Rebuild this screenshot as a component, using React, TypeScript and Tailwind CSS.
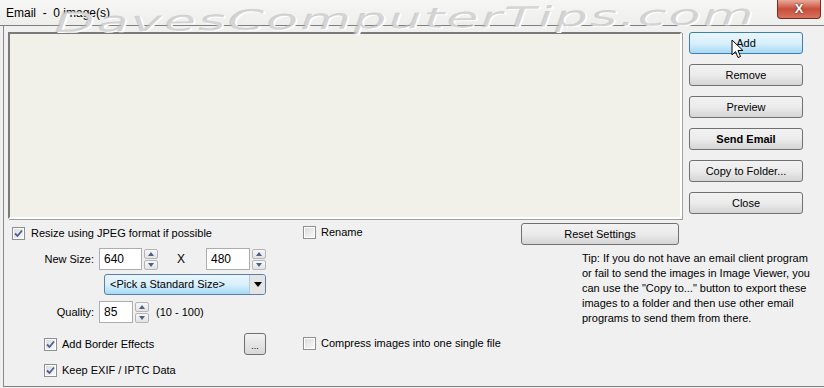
const font = { fontFamily: '"Liberation Sans", Arial, sans-serif' };

function Check({ checked }: { checked?: boolean }) {
  return (
    <div className="w-[13px] h-[13px] shrink-0 border border-[#8e8f8f] bg-white p-[1px]">
      <div className="w-full h-full bg-gradient-to-br from-[#dcdcdc] to-[#f8f8f8] flex items-center justify-center">
        {checked && (
          <svg width="9" height="9" viewBox="0 0 9 9">
            <path d="M1 4.5 L3.5 7 L8 1.5" fill="none" stroke="#4a5f97" strokeWidth="1.8" />
          </svg>
        )}
      </div>
    </div>
  );
}

function Btn({ label, bold, hover, className = "" }: { label: string; bold?: boolean; hover?: boolean; className?: string }) {
  return (
    <div
      className={`h-[22px] flex items-center justify-center rounded-[3px] border text-[11px] text-black ${
        hover
          ? "border-[#3c7fb1] bg-gradient-to-b from-[#eaf6fd] via-[#d9f0fc] to-[#a7d9f5]"
          : "border-[#707070] bg-gradient-to-b from-[#f2f2f2] via-[#ebebeb] to-[#d5d5d5]"
      } ${bold ? "font-bold" : ""} ${className}`}
    >
      {label}
    </div>
  );
}

function Spin() {
  return (
    <div className="ml-[2px] flex flex-col gap-[1px]">
      {[0, 1].map((i) => (
        <div key={i} className="w-[14px] h-[10px] border border-[#b5b5b5] rounded-[2px] bg-gradient-to-b from-[#f7f7f7] to-[#e3e3e3] flex items-center justify-center">
          <svg width="6" height="4" viewBox="0 0 6 4">
            <path d={i === 0 ? "M0 4 L3 0 L6 4Z" : "M0 0 L3 4 L6 0Z"} fill="#4d6185" />
          </svg>
        </div>
      ))}
    </div>
  );
}

function Field({ value, w }: { value: string; w: string }) {
  return (
    <div className={`${w} h-[22px] border border-[#abadb3] bg-white flex items-center pl-[4px] text-[12px]`}>{value}</div>
  );
}

export default function App() {
  return (
    <div className="relative w-[824px] h-[388px] overflow-hidden bg-[#f0f0f0] text-[11px] text-black" style={font}>
      {/* title bar */}
      <div className="h-[26px] flex items-center pl-[6px] text-[12px] bg-gradient-to-b from-[#f6f6f4] to-[#eeeeec] border-b border-[#7f7f7f]">
        <span className="whitespace-pre">Email  -  0 image(s)</span>
      </div>

      {/* body */}
      <div className="ml-[3px] h-[361px] border-l border-b border-[#7f7f7f] border-l-[#8a8a8a]">
        <div className="flex pt-[6px] pl-[4px]">
          <div className="w-[674px] h-[187px] border-2 border-[#7a7a7a] border-r-white border-b-white bg-[#f1f1e9] shadow-[1px_1px_0_#a0a0a0]" />
          <div className="ml-[7px] w-[114px] flex flex-col gap-[10px]">
            <Btn label="Add" hover />
            <Btn label="Remove" />
            <Btn label="Preview" />
            <Btn label="Send Email" bold />
            <Btn label="Copy to Folder..." />
            <Btn label="Close" />
          </div>
        </div>

        <div className="flex">
          {/* column A */}
          <div className="w-[291px] pl-[8px] pt-[8px] flex flex-col">
            <div className="flex items-center gap-[6px] h-[13px]">
              <Check checked />
              <span>Resize using JPEG format if possible</span>
            </div>
            <div className="flex items-center mt-[8px] h-[22px]">
              <span className="w-[87px] text-right pr-[5px]">New Size:</span>
              <Field value="640" w="w-[43px]" />
              <Spin />
              <span className="ml-[19px] w-[29px] text-[12px]">X</span>
              <Field value="480" w="w-[44px]" />
              <Spin />
            </div>
            <div className="ml-[92px] mt-[4px] w-[162px] h-[21px] rounded-[3px] border border-[#5c7fa5] bg-gradient-to-b from-[#eaf6fd] via-[#d9f0fc] to-[#a7d9f5] flex items-center">
              <span className="flex-1 pl-[5px]">&lt;Pick a Standard Size&gt;</span>
              <div className="w-[16px] h-full border-l border-[#b9c9d8] flex items-center justify-center bg-[#e4e4e4] rounded-r-[2px]">
                <svg width="8" height="5" viewBox="0 0 8 5"><path d="M0 0 L8 0 L4 5Z" fill="#000" /></svg>
              </div>
            </div>
            <div className="flex items-center mt-[6px] h-[22px]">
              <span className="w-[87px] text-right pr-[5px]">Quality:</span>
              <Field value="85" w="w-[34px]" />
              <Spin />
              <span className="ml-[7px]">(10 - 100)</span>
            </div>
            <div className="flex items-center mt-[10px] h-[22px] pl-[32px]">
              <Check checked />
              <span className="ml-[5px] w-[182px]">Add Border Effects</span>
              <div className="w-[22px] h-[22px] rounded-[3px] border border-[#707070] bg-gradient-to-b from-[#f2f2f2] to-[#d8d8d8] flex items-end justify-center pb-[3px] text-[9px] leading-none">...</div>
            </div>
            <div className="flex items-center mt-[9px] h-[13px] pl-[32px]">
              <Check checked />
              <span className="ml-[5px]">Keep EXIF / IPTC Data</span>
            </div>
          </div>

          {/* column B */}
          <div className="w-[226px] pt-[7px] pl-[8px] flex flex-col">
            <div className="flex items-center gap-[5px] h-[13px]">
              <Check />
              <span>Rename</span>
            </div>
            <div className="flex items-center gap-[5px] h-[13px] mt-[98px]">
              <Check />
              <span>Compress images into one single file</span>
            </div>
          </div>

          {/* column C */}
          <div className="pt-[4px] flex flex-col">
            <Btn label="Reset Settings" className="w-[158px]" />
            <p className="mt-[6px] ml-[61px] w-[232px] leading-[15px]">
              Tip: If you do not have an email client program or fail to send the images in Image Viewer, you can use the "Copy to..." button to export these images to a folder and then use other email programs to send them from there.
            </p>
          </div>
        </div>
      </div>

      {/* watermark over the title area */}
      <div
        className="absolute left-[54px] top-[11px] text-[28px] leading-[24px] italic tracking-[1px] text-[#b9b9b9]/60 whitespace-nowrap pointer-events-none origin-left scale-x-[1.88] -rotate-[0.65deg]"
        style={{ fontFamily: '"DejaVu Sans", sans-serif', textShadow: "1px 1px 0 #ffffff" }}
      >
        DavesComputerTips.com
      </div>
      <div className="absolute right-[3px] top-0 w-[44px] h-[19px] rounded-b-[4px] border border-[#7b2a1e] border-t-0 bg-gradient-to-b from-[#e9a99a] via-[#c84d3b] to-[#d7735f] flex items-center justify-center">
        <span className="text-white font-bold text-[13px]" style={{ textShadow: "0 0 2px #3a1a10" }}>X</span>
      </div>

      {/* mouse cursor over Add */}
      <svg className="absolute left-[731px] top-[39px]" width="14" height="21" viewBox="0 0 14 21">
        <path d="M1 1 L1 16 L4.5 12.5 L7 18.5 L9.5 17.5 L7 11.5 L12 11.5 Z" fill="#fff" stroke="#000" strokeWidth="1" />
      </svg>
    </div>
  );
}
